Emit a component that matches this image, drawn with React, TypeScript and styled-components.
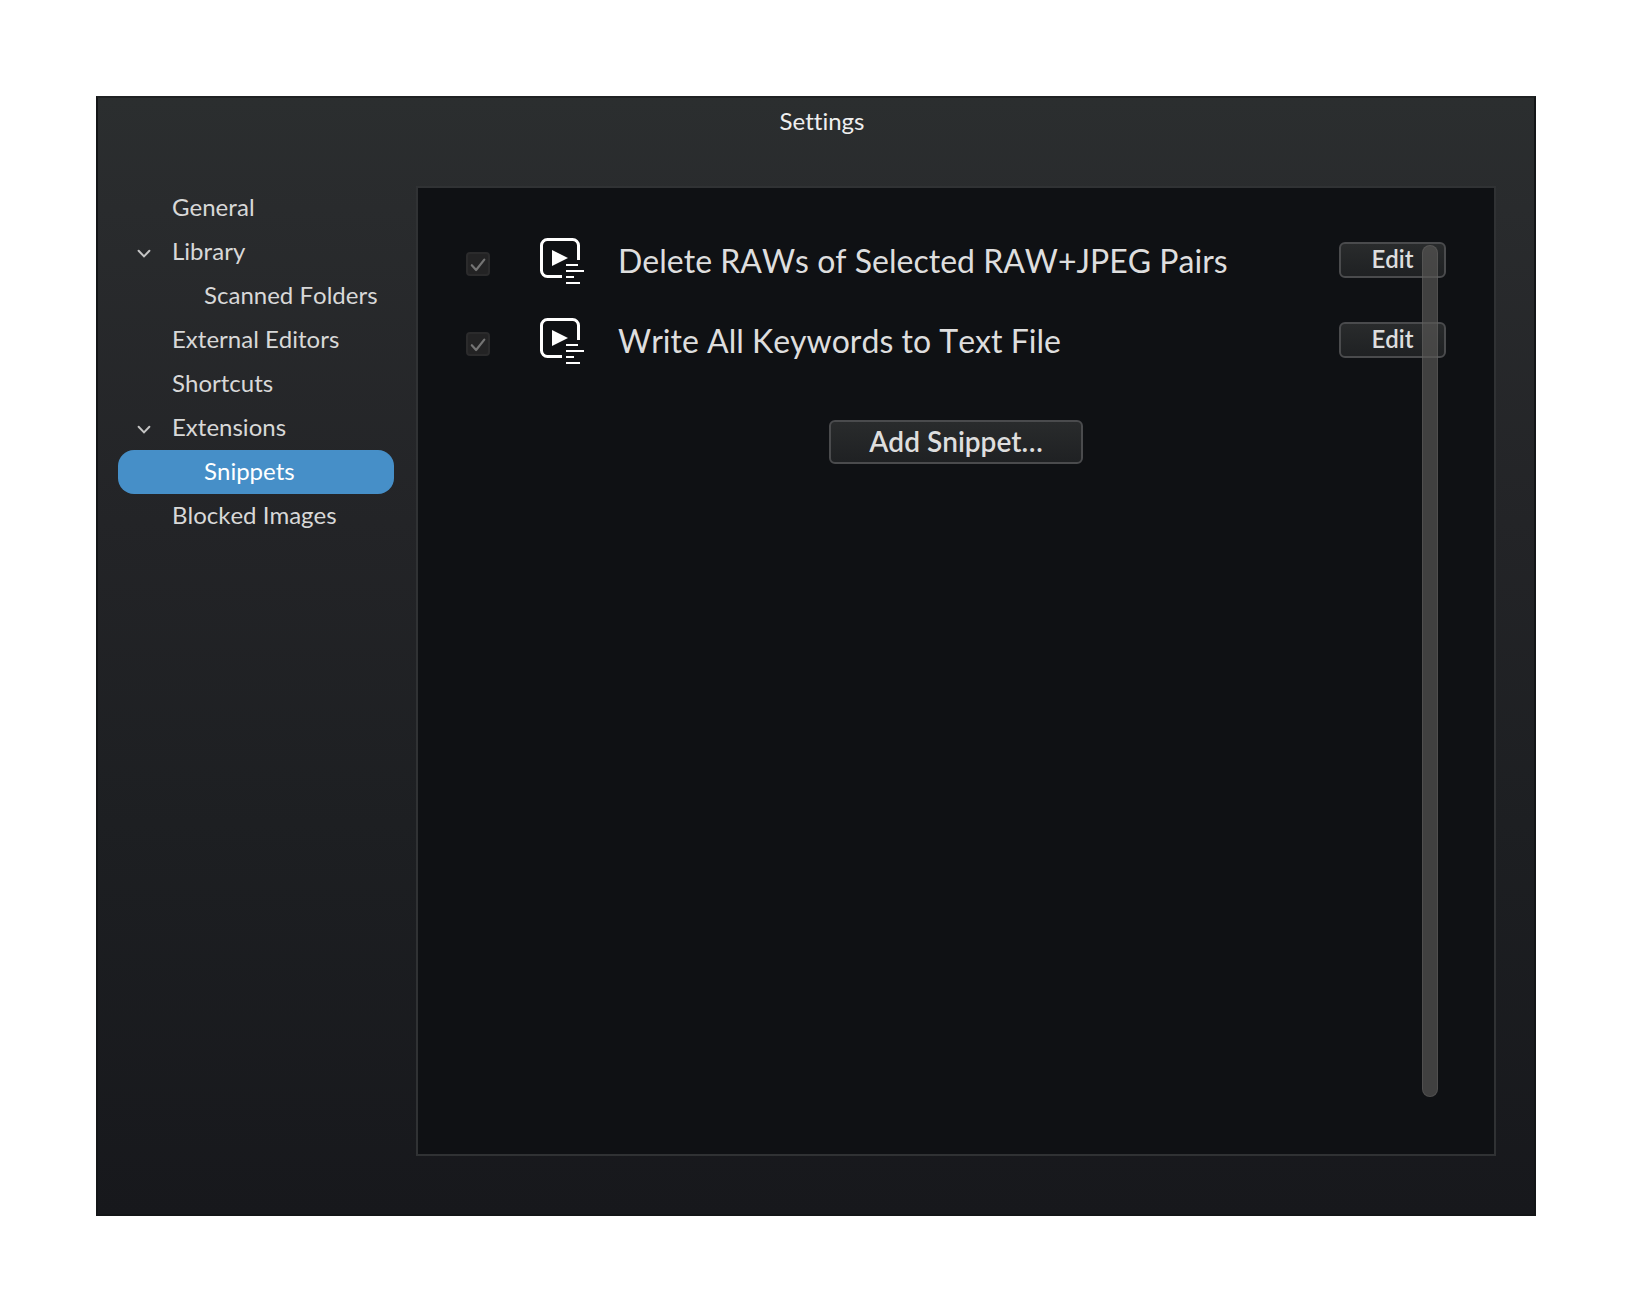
import React, { useState } from "react";
import styled, { createGlobalStyle } from "styled-components";

const GlobalStyle = createGlobalStyle`
  *, *::before, *::after { box-sizing: border-box; }
  body {
    margin: 0;
    background: #ffffff;
    font-family: Lato, "Open Sans", sans-serif;
    color: #dedede;
  }
  body, button, input {
    font-kerning: none;
    font-variant-ligatures: none;
  }
`;

const Page = styled.div`
  display: flex;
  min-height: 100vh;
  padding: 96px;
`;

const Window = styled.main`
  flex: 1;
  display: flex;
  flex-direction: column;
  border: 2px solid #131517;
  border-top-color: #1f2223;
  background: linear-gradient(#2b2e2f 0%, #292b2d 10%, #232427 38%, #1d1f22 65%, #17181c 100%);
`;

const TitleBar = styled.header`
  height: 88px;
  padding: 7px 0 0 12px;
  text-align: center;
`;

const Title = styled.h1`
  margin: 0;
  font-size: 24px;
  line-height: 32px;
  font-weight: 400;
  color: #efefef;
`;

const Body = styled.div`
  flex: 1;
  display: grid;
  grid-template-columns: 276px 1fr;
  gap: 22px;
  padding: 0 38px 58px 20px;
`;

const NavList = styled.ul`
  margin: 0;
  padding: 0;
  list-style: none;
`;

const NavItem = styled.button<{ $level: number; $selected: boolean }>`
  display: flex;
  align-items: center;
  width: 100%;
  height: 44px;
  padding: 0 0 2px ${(p) => (p.$level === 0 ? 18 : 50)}px;
  border: 0;
  border-radius: 16px;
  background: ${(p) => (p.$selected ? "#468fc8" : "transparent")};
  color: ${(p) => (p.$selected ? "#ffffff" : "#d8d8d8")};
  font-family: Lato, "Open Sans", sans-serif;
  font-size: 24px;
  line-height: 32px;
  text-align: left;
  white-space: nowrap;
`;

const Disclosure = styled.span`
  display: flex;
  width: 36px;
  padding-top: 6px;
  flex: none;
`;

const Panel = styled.section`
  position: relative;
  padding: 32px 48px;
  border: 2px solid #303234;
  background: #0f1114;
`;

const SnippetList = styled.ul`
  margin: 0 0 40px;
  padding: 0;
  list-style: none;
`;

const SnippetRow = styled.li`
  display: grid;
  grid-template-columns: 74px 78px 1fr auto;
  align-items: center;
  height: 80px;
`;

const CheckHolder = styled.span`
  display: grid;
  width: 24px;
  margin-top: 8px;
  > * { grid-area: 1 / 1; }
  > svg { pointer-events: none; }
`;

const CheckBox = styled.input`
  appearance: none;
  width: 24px;
  height: 24px;
  margin: 0;
  border: 2px solid #2b2b2c;
  border-radius: 4px;
  background: #232324;
`;

const IconHolder = styled.span`
  display: flex;
  padding-top: 2px;
`;

const SnippetName = styled.label`
  padding-top: 2px;
  font-size: 32px;
  line-height: 40px;
  color: #dedede;
`;

const PushButton = styled.button<{ $large?: boolean }>`
  display: flex;
  align-items: center;
  justify-content: center;
  width: ${(p) => (p.$large ? 254 : 107)}px;
  height: ${(p) => (p.$large ? 44 : 36)}px;
  margin: 0 auto;
  padding: 0 0 2px;
  border: 2px solid #4a4b4d;
  border-radius: 6px;
  background: linear-gradient(#292b2c, #1f2123);
  color: #dedede;
  font-family: Lato, "Open Sans", sans-serif;
  font-size: ${(p) => (p.$large ? 28 : 24)}px;
  line-height: 32px;
  font-weight: 600;
`;

const ScrollThumb = styled.div`
  position: absolute;
  top: 57px;
  right: 56px;
  bottom: 57px;
  width: 16px;
  border: 1px solid rgba(110, 110, 110, 0.35);
  border-radius: 8px;
  background: rgba(88, 87, 86, 0.68);
`;

const Chevron = () => (
  <svg width="16" height="12" viewBox="0 0 16 12" fill="none" aria-hidden="true">
    <path d="M2.6 2.8 8 8.4l5.4-5.6" stroke="#c4c4c4" strokeWidth="2" strokeLinecap="round" />
  </svg>
);

const CheckMark = () => (
  <svg width="24" height="24" viewBox="0 0 24 24" fill="none" aria-hidden="true">
    <path d="m5.8 13.2 4.3 4.8 8.2-10.4" stroke="#747474" strokeWidth="2.2" strokeLinecap="round" strokeLinejoin="round" />
  </svg>
);

const SnippetIcon = () => (
  <svg width="44" height="46" viewBox="0 0 44 46" fill="none" aria-hidden="true">
    <path d="M38.5 22V7.5a6 6 0 0 0-6-6h-25a6 6 0 0 0-6 6v25a6 6 0 0 0 6 6H22" stroke="#fff" strokeWidth="3" />
    <path d="m12 12 16 8-16 8z" fill="#fff" />
    <path d="M26 27h12M26 33h18M26 39h8M26 45h14" stroke="#fff" strokeWidth="2" />
  </svg>
);

const sections = [
  { name: "General", level: 0 },
  { name: "Library", level: 0, open: true },
  { name: "Scanned Folders", level: 1 },
  { name: "External Editors", level: 0 },
  { name: "Shortcuts", level: 0 },
  { name: "Extensions", level: 0, open: true },
  { name: "Snippets", level: 1 },
  { name: "Blocked Images", level: 0 },
];

const snippets = [
  { id: "delete-raws", name: "Delete RAWs of Selected RAW+JPEG Pairs" },
  { id: "write-keywords", name: "Write All Keywords to Text File" },
];

export default function App() {
  const [current, setCurrent] = useState("Snippets");
  return (
    <>
      <GlobalStyle />
      <Page>
        <Window>
          <TitleBar>
            <Title>Settings</Title>
          </TitleBar>
          <Body>
            <nav>
              <NavList>
                {sections.map((s) => (
                  <li key={s.name}>
                    <NavItem
                      type="button"
                      $level={s.level}
                      $selected={s.name === current}
                      onClick={() => setCurrent(s.name)}
                    >
                      <Disclosure>{s.open && <Chevron />}</Disclosure>
                      {s.name}
                    </NavItem>
                  </li>
                ))}
              </NavList>
            </nav>
            <Panel>
              <SnippetList>
                {snippets.map((s) => (
                  <SnippetRow key={s.id}>
                    <CheckHolder>
                      <CheckBox id={s.id} type="checkbox" defaultChecked disabled />
                      <CheckMark />
                    </CheckHolder>
                    <IconHolder>
                      <SnippetIcon />
                    </IconHolder>
                    <SnippetName htmlFor={s.id}>{s.name}</SnippetName>
                    <PushButton type="button">Edit</PushButton>
                  </SnippetRow>
                ))}
              </SnippetList>
              <PushButton type="button" $large>
                Add Snippet…
              </PushButton>
              <ScrollThumb />
            </Panel>
          </Body>
        </Window>
      </Page>
    </>
  );
}
